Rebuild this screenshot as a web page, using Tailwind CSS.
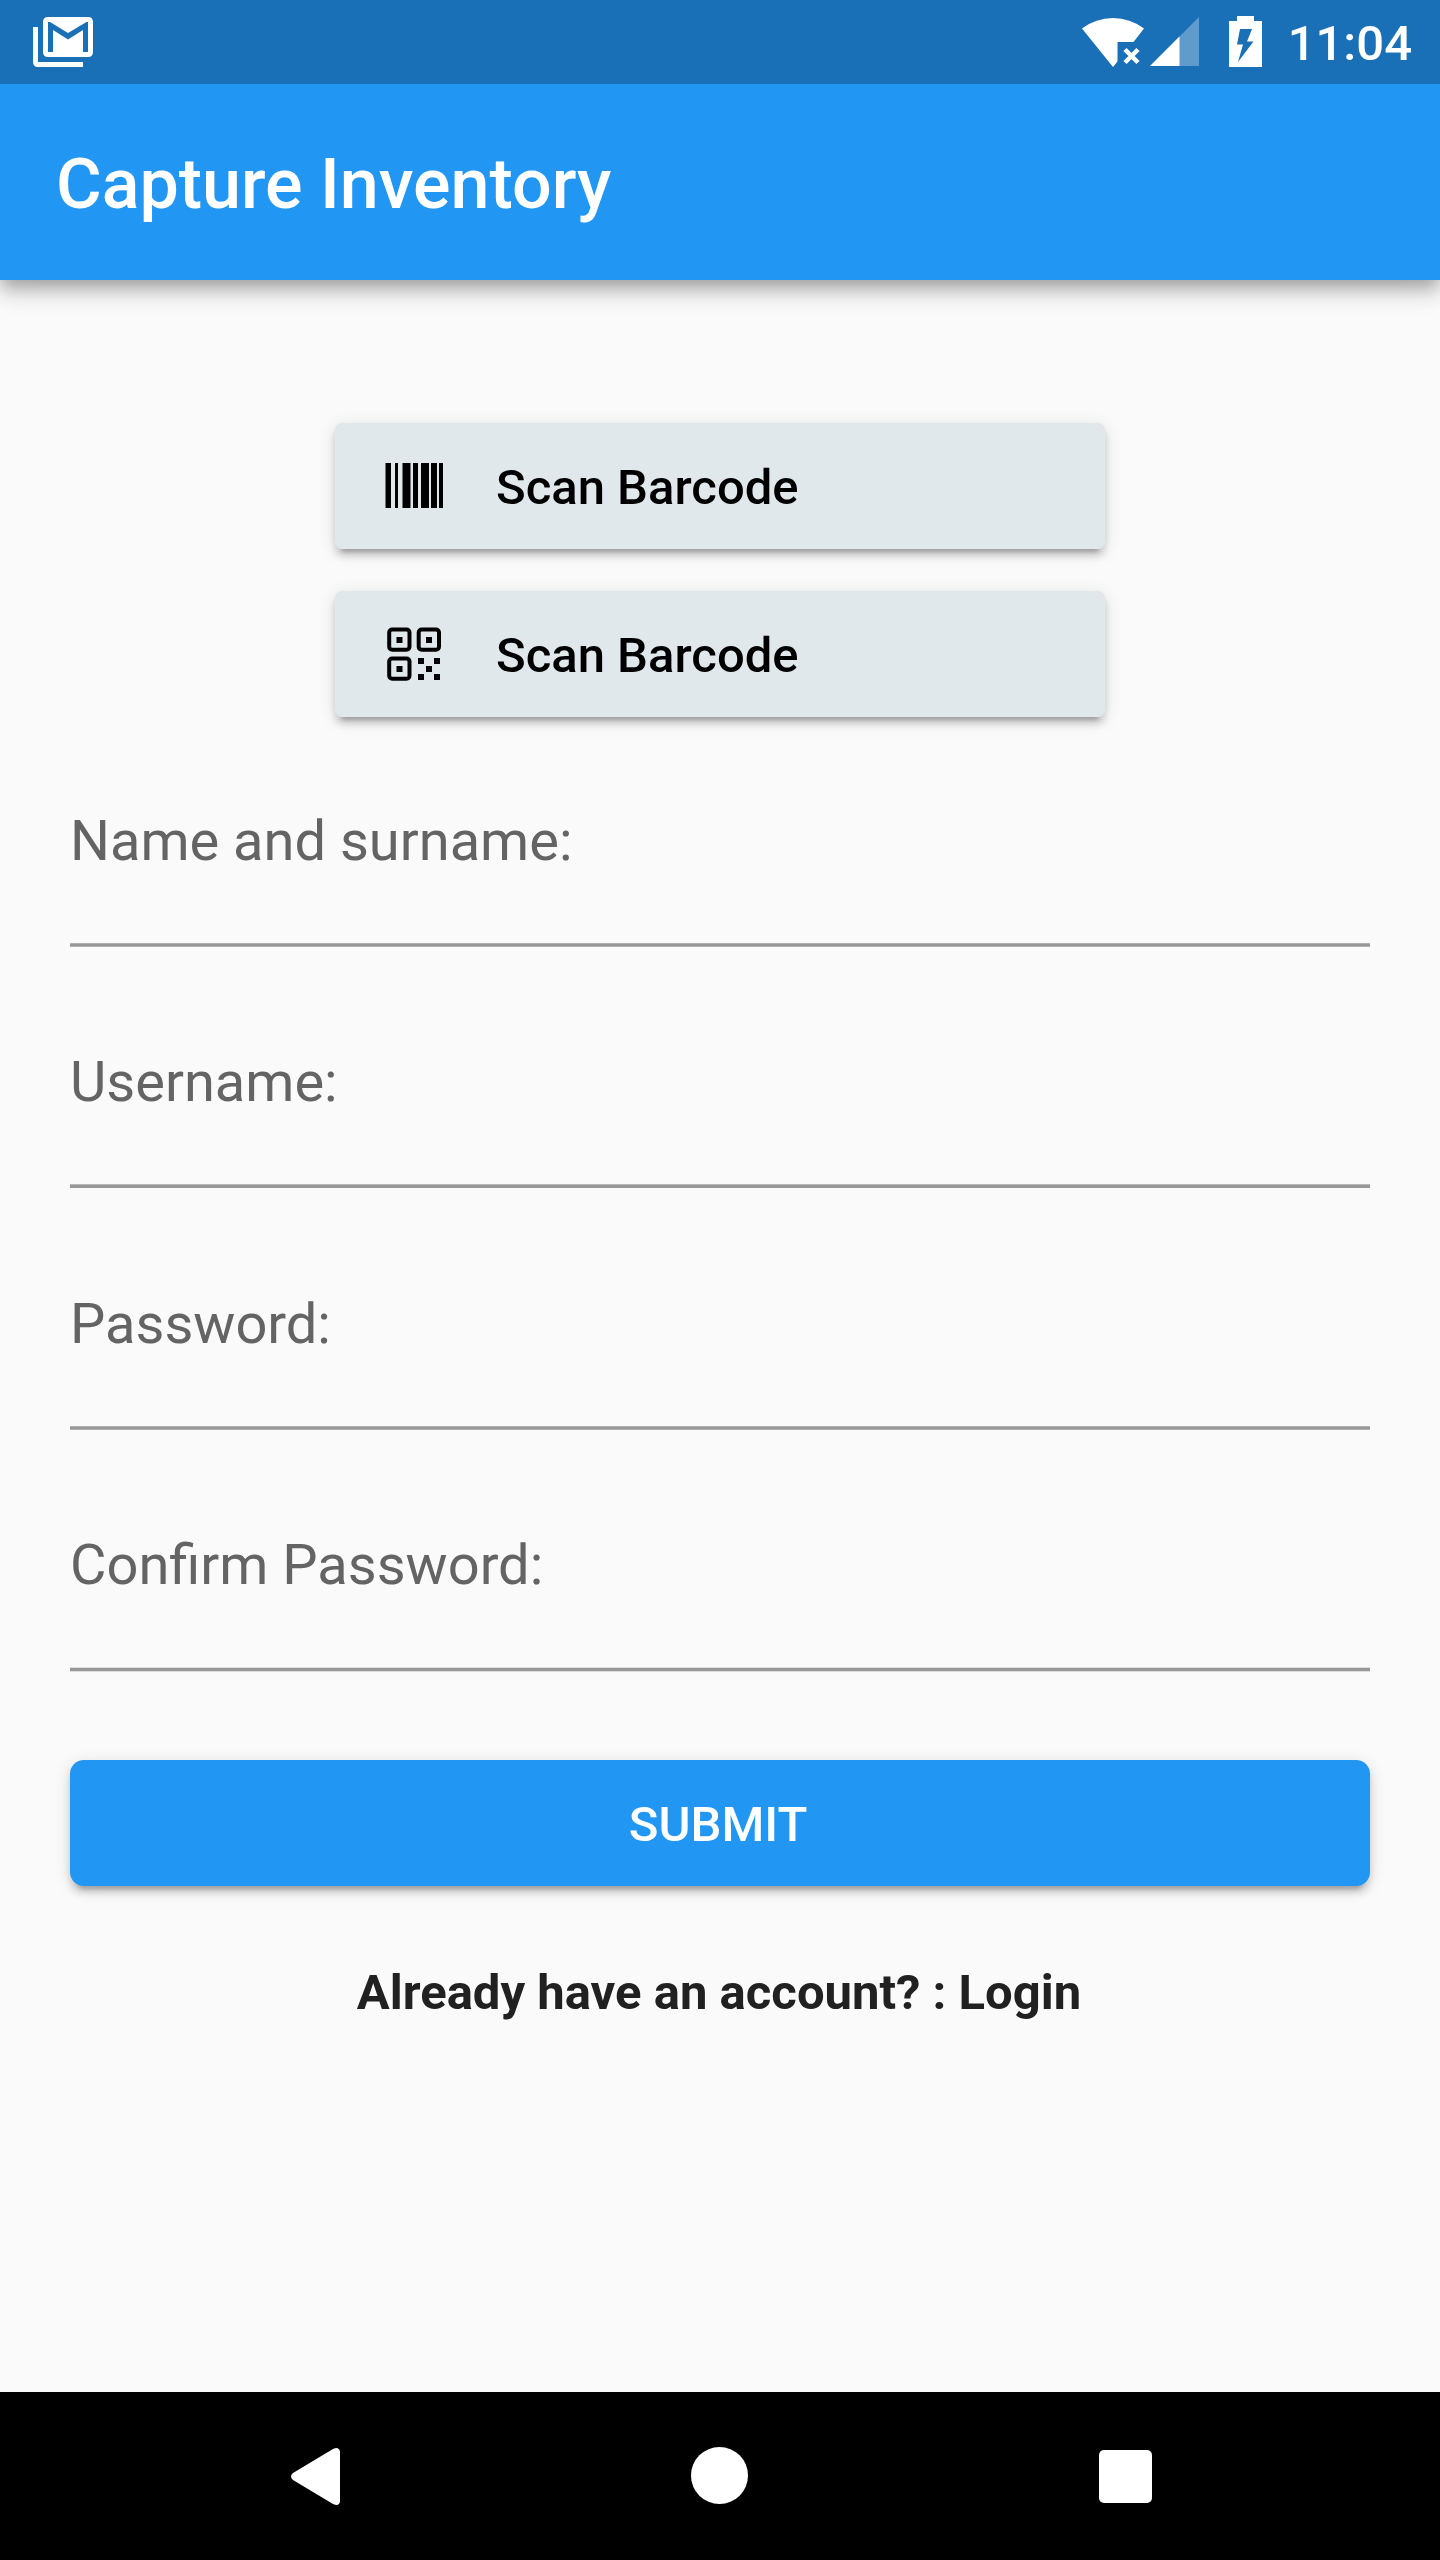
<!DOCTYPE html>
<html lang="en">
<head>
<meta charset="utf-8">
<title>Capture Inventory</title>
<script src="https://cdn.jsdelivr.net/npm/@tailwindcss/browser@4"></script>
</head>
<body class="flex h-[2560px] w-[1440px] flex-col overflow-hidden bg-[#fafafa] font-['Roboto',sans-serif]">
  <!-- Status bar -->
  <div class="relative z-10 flex h-[84px] shrink-0 items-start justify-between bg-[#1a70b7] text-white">
    <svg class="ml-[33px] mt-[17px] h-[50px] w-[60px]" viewBox="0 0 60 50" fill="currentColor">
      <path d="M0 10H5V45H50V50H5Q0 50 0 45Z"/>
      <path fill-rule="evenodd" d="M15 0H55Q60 0 60 5V35Q60 40 55 40H15Q10 40 10 35V5Q10 0 15 0ZM15 5V35H20V13L35 22.5L50 13V35H55V5H53.500L35 16L17 5Z"/>
    </svg>
    <div class="flex items-start">
      <svg class="mt-4 h-[52px] w-[62px]" viewBox="0 0 62 52" fill="currentColor">
        <path d="M0 12.500Q14 2 31 2T62 12.500L51.500 26H35.500V45.500L31 51Z"/>
        <path d="M43 33.500L56 46.500M56 33.500L43 46.500" fill="none" stroke="currentColor" stroke-width="4.500"/>
      </svg>
      <svg class="ml-[6px] mt-[17px] h-[49px] w-[49px]" viewBox="0 0 49 49" fill="currentColor">
        <path opacity=".3" d="M0 49L49 0V49Z"/>
        <path d="M0 49L29.500 19.500V49Z"/>
      </svg>
      <svg class="ml-[30px] mt-4 h-[51px] w-[33px]" viewBox="0 0 33 51" fill="currentColor">
        <path fill-rule="evenodd" d="M8 0H25V5H33V51H0V5H8ZM11 13L8 28.500H14L9 46L24.500 25.500H18L23 13Z"/>
      </svg>
      <span class="ml-[26px] mr-[28px] mt-[14px] text-[49px] leading-[60px] font-medium">11:04</span>
    </div>
  </div>
  <!-- App bar -->
  <header class="flex h-[196px] shrink-0 items-center bg-[#2196f3] pl-[56px] pt-[4px] text-white shadow-[0_7px_14px_-3px_rgba(0,0,0,0.2),0_14px_17px_rgba(0,0,0,0.14),0_3px_35px_rgba(0,0,0,0.12)]">
    <h1 class="text-[70px] leading-[84px] font-medium whitespace-nowrap">Capture Inventory</h1>
  </header>
  <!-- Form -->
  <main class="flex flex-1 flex-col px-[70px] pt-[143px]">
    <div class="flex flex-col items-center gap-[42px]">
      <button class="flex h-[126px] w-[770px] items-center rounded-[7px] bg-[#e0e8eb] pl-[50px] shadow-[0_10px_4px_-7px_rgba(0,0,0,0.2),0_7px_7px_rgba(0,0,0,0.14),0_3px_17px_rgba(0,0,0,0.12)]">
        <svg class="mb-[1px] h-[45px] w-[58px]" viewBox="0 0 58 45">
          <path d="M.5 0H6V45H.5ZM10 0H13V45H10ZM17.500 0H25.500V45H17.500ZM28 0H33V45H28ZM36 0H44V45H36ZM46 0H52V45H46ZM54 0H58V45H54Z"/>
        </svg>
        <span class="ml-[53px] pt-[4px] text-[49px] leading-[56px] font-medium">Scan Barcode</span>
      </button>
      <button class="flex h-[126px] w-[770px] items-center rounded-[7px] bg-[#e0e8eb] pl-[50px] shadow-[0_10px_4px_-7px_rgba(0,0,0,0.2),0_7px_7px_rgba(0,0,0,0.14),0_3px_17px_rgba(0,0,0,0.12)]">
        <svg class="h-[54px] w-[58px]" viewBox="0 0 58 54">
          <g fill="none" stroke="#000" stroke-width="4">
            <rect x="4.200" y="2.500" width="20.300" height="20.300" rx="3"/>
            <rect x="33.700" y="2.500" width="20.300" height="20.300" rx="3"/>
            <rect x="4.200" y="31.500" width="20.300" height="20.300" rx="3"/>
          </g>
          <path d="M11.500 10H17.500V16H11.500ZM41 10H47V16H41ZM11.500 39H17.500V45H11.500ZM33 31H39V37H33ZM49 31H55V37H49ZM41 39H47V45H41ZM33 47H39V53H33ZM49 47H55V53H49Z"/>
        </svg>
        <span class="ml-[53px] pt-[4px] text-[49px] leading-[56px] font-medium">Scan Barcode</span>
      </button>
    </div>
    <div class="mt-[92px] flex flex-col text-[56px] leading-[64px] text-[#646464]">
      <div class="flex h-[138px] flex-col justify-between">
        <label>Name and surname:</label>
        <div class="h-[4px] border-y border-[#b0b0b0] bg-[#989898]"></div>
      </div>
      <div class="mt-[103px] flex h-[138px] flex-col justify-between">
        <label>Username:</label>
        <div class="h-[4px] border-t border-[#b8b8b8] bg-[#989898]"></div>
      </div>
      <div class="mt-[104px] flex h-[138px] flex-col justify-between">
        <label>Password:</label>
        <div class="h-[4px] border-y border-[#b0b0b0] bg-[#989898]"></div>
      </div>
      <div class="mt-[103px] flex h-[139px] flex-col justify-between">
        <label>Confirm Password:</label>
        <div class="h-[5px] border-y border-[#dedede] bg-[#989898]"></div>
      </div>
    </div>
    <button class="mt-[88px] h-[126px] w-full shrink-0 rounded-[14px] bg-[#2196f3] pr-[4px] pt-[4px] text-[49px] leading-[56px] font-medium text-white shadow-[0_10px_4px_-7px_rgba(0,0,0,0.2),0_7px_7px_rgba(0,0,0,0.14),0_3px_17px_rgba(0,0,0,0.12)]">SUBMIT</button>
    <a class="mt-[77.5px] self-center pr-[2px] text-[49px] leading-[58px] font-bold whitespace-nowrap text-[#212121]">Already have an account? : Login</a>
  </main>
  <!-- Navigation bar -->
  <nav class="flex h-[168px] shrink-0 items-start bg-black pt-[55px] text-white">
    <svg class="ml-[291px] mt-[1px] h-[57px] w-[49px]" viewBox="0 0 49 57" fill="currentColor">
      <path d="M42 1Q44 0 46 0Q49 1 49 4V53Q49 56 46 57Q44 57 42 56L2 32Q-2 28.500 2 25Z"/>
    </svg>
    <div class="ml-[351px] size-[57px] rounded-full bg-white"></div>
    <div class="ml-[351px] mt-[3px] h-[53px] w-[53px] rounded-[5px] bg-white"></div>
  </nav>
</body>
</html>
